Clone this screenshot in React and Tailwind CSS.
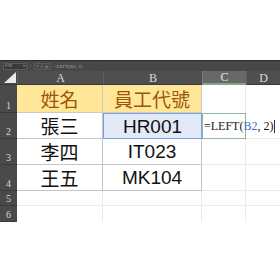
import React from "react";

const cjk = { fontFamily: '"Noto Sans CJK TC", "Noto Sans", sans-serif' };
const latin = { fontFamily: '"Liberation Sans", Arial, sans-serif' };
const serif = { fontFamily: '"Liberation Serif", "Times New Roman", serif' };

const rows = [
  { n: "2", name: "張三", code: "HR001", h: "h-[26px]" },
  { n: "3", name: "李四", code: "IT023", h: "h-[26px]" },
  { n: "4", name: "王五", code: "MK104", h: "h-[26px]" },
];

const RowHead = ({ n, h }) => (
  <div
    className={`${h} bg-[#4a4a4a] border-b border-[#3a3a3a] flex items-end justify-center text-[10px] leading-none text-[#d8d8d8] pb-[1px]`}
    style={serif}
  >
    {n}
  </div>
);

const App = () => {
  return (
    <div className="w-[280px] h-[280px] bg-white overflow-hidden flex flex-col">
      <div className="h-[60px] shrink-0" />
      <div className="flex flex-col">
        {/* formula bar */}
        <div className="h-[11px] bg-[#474747] border-t border-[#2e2e2e] flex items-center gap-[3px] pl-[3px]">
          <div className="w-[24px] h-[7px] bg-[#3a3a3a] border border-[#5a5a5a] flex items-center justify-between px-[1px] text-[4px] leading-none text-[#9a9a9a]">
            <span>F/M</span>
            <span>▾</span>
          </div>
          <span className="text-[4px] leading-none text-[#888]">⁝</span>
          <div className="h-[7px] border border-[#5a5a5a] flex items-center gap-[1px] px-[1px] text-[5px] leading-none">
            <span className="text-[#c8743a]">×</span>
            <span className="text-[#6fae5a]">✓</span>
            <span className="text-[#aaa] italic" style={serif}>fx</span>
          </div>
          <span className="text-[5px] leading-none text-[#a8a8a8]" style={serif}>=LEFT(B2, 2)</span>
        </div>

        {/* grid */}
        <div className="grid grid-cols-[17px_86px_99px_44px_1fr]">
          {/* column headers */}
          <div className="h-[14px] bg-[#484848] relative border-b border-[#3a3a3a]">
            <div className="absolute right-[1px] bottom-[1px] w-0 h-0 border-l-[12px] border-l-transparent border-b-[11px] border-b-[#e9e9e9]" />
          </div>
          <div className="h-[14px] bg-[#4f4f4f] border-l border-[#5e5e5e] border-b border-b-[#3a3a3a] flex items-center justify-center text-[12px] leading-none text-[#dcdcdc]" style={serif}>A</div>
          <div className="h-[14px] bg-[#4f4f4f] border-l border-[#5e5e5e] border-b border-b-[#3a3a3a] flex items-center justify-center text-[12px] leading-none text-[#dcdcdc]" style={serif}>B</div>
          <div className="h-[14px] bg-[#686868] border-l border-[#777] border-b-2 border-b-[#7fa88a] flex items-center justify-center text-[12px] leading-none text-[#e6e6e6]" style={serif}>C</div>
          <div className="h-[14px] bg-[#4f4f4f] border-l border-[#5e5e5e] border-b border-b-[#3a3a3a] flex items-center justify-center text-[12px] leading-none text-[#dcdcdc]" style={serif}>D</div>

          {/* row 1 */}
          <RowHead n="1" h="h-[28px]" />
          <div className="h-[28px] bg-[#ffe699] border-r border-b border-[#c9c9c9] flex items-center justify-center text-[19px] leading-none text-[#9c5700]" style={cjk}>姓名</div>
          <div className="h-[28px] bg-[#ffe699] border-r border-b border-[#c9c9c9] flex items-center justify-center text-[19px] leading-none text-[#9c5700]" style={cjk}>員工代號</div>
          <div className="h-[28px] border-r border-[#ebebeb]" />
          <div className="h-[28px]" />

          {rows.map((r, i) => (
            <React.Fragment key={r.n}>
              <RowHead n={r.n} h={r.h} />
              <div className={`${r.h} border-r border-b border-[#c4c4c4] flex items-center justify-center text-[19px] leading-none text-[#111]`} style={cjk}>
                {r.name}
              </div>
              {i === 0 ? (
                <div className={`${r.h} bg-[#e3eaf7] border border-[#7ea1dc] flex items-center justify-center text-[19px] leading-none text-[#111]`} style={latin}>
                  {r.code}
                </div>
              ) : (
                <div className={`${r.h} border-r border-b border-[#c4c4c4] flex items-center justify-center text-[19px] leading-none text-[#111]`} style={latin}>
                  {r.code}
                </div>
              )}
              {i === 0 ? (
                <div className={`${r.h} border border-[#8fb89a] relative`}>
                  <div className="absolute left-[1px] top-0 bottom-0 flex items-center whitespace-nowrap text-[12px] leading-none text-[#222]" style={serif}>
                    <span>=LEFT(</span>
                    <span className="text-[#3f6fc4]">B2</span>
                    <span>, 2)</span>
                    <span className="w-px h-[13px] bg-[#333] ml-px" />
                  </div>
                </div>
              ) : (
                <div className={`${r.h} border-r border-b border-[#ebebeb]`} />
              )}
              <div className={`${r.h} border-b border-[#ebebeb]`} />
            </React.Fragment>
          ))}

          {/* rows 5, 6 */}
          <RowHead n="5" h="h-[15px]" />
          <div className="h-[15px] border-r border-b border-[#ebebeb]" />
          <div className="h-[15px] border-r border-b border-[#ebebeb]" />
          <div className="h-[15px] border-r border-b border-[#ebebeb]" />
          <div className="h-[15px] border-b border-[#ebebeb]" />

          <RowHead n="6" h="h-[16px]" />
          <div className="h-[16px] border-r border-[#ebebeb]" />
          <div className="h-[16px] border-r border-[#ebebeb]" />
          <div className="h-[16px] border-r border-[#ebebeb]" />
          <div className="h-[16px]" />
        </div>
      </div>
    </div>
  );
};

export default App;
